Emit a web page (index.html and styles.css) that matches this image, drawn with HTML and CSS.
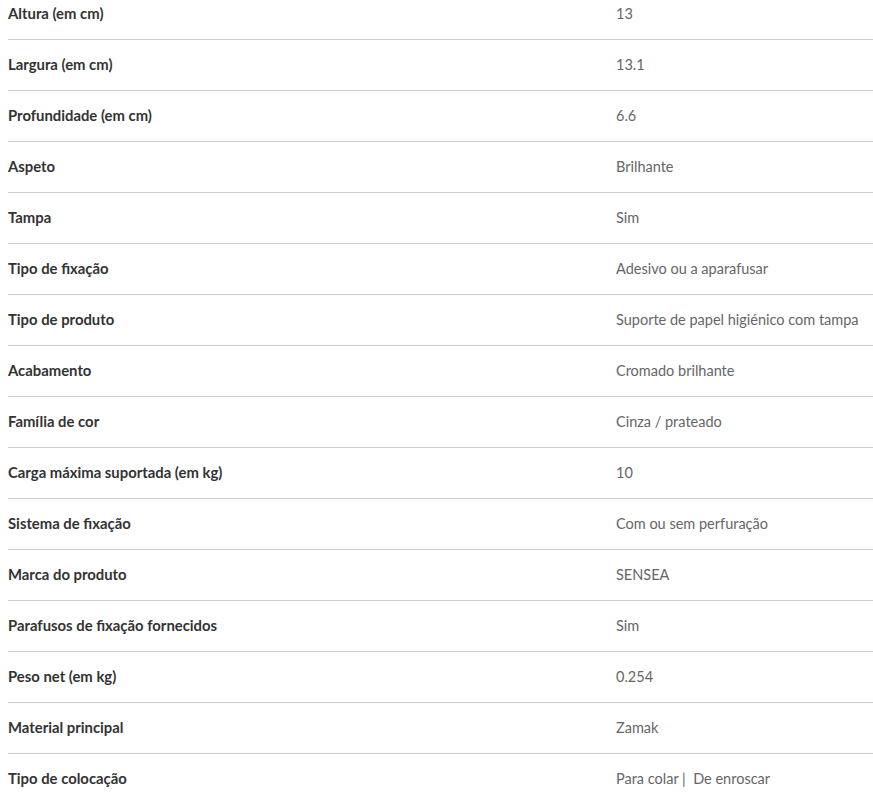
FILE: index.html
```html
<!DOCTYPE html>
<html lang="pt">
<head>
<meta charset="utf-8">
<link rel="stylesheet" href="styles.css">
</head>
<body>
<div class="specs">
  <div class="row"><div class="label">Altura (em cm)</div><div class="value">13</div></div>
  <div class="row"><div class="label">Largura (em cm)</div><div class="value">13.1</div></div>
  <div class="row"><div class="label">Profundidade (em cm)</div><div class="value">6.6</div></div>
  <div class="row"><div class="label">Aspeto</div><div class="value">Brilhante</div></div>
  <div class="row"><div class="label">Tampa</div><div class="value">Sim</div></div>
  <div class="row"><div class="label">Tipo de fixação</div><div class="value">Adesivo ou a aparafusar</div></div>
  <div class="row"><div class="label">Tipo de produto</div><div class="value">Suporte de papel higiénico com tampa</div></div>
  <div class="row"><div class="label">Acabamento</div><div class="value">Cromado brilhante</div></div>
  <div class="row"><div class="label">Família de cor</div><div class="value">Cinza / prateado</div></div>
  <div class="row"><div class="label">Carga máxima suportada (em kg)</div><div class="value">10</div></div>
  <div class="row"><div class="label">Sistema de fixação</div><div class="value">Com ou sem perfuração</div></div>
  <div class="row"><div class="label">Marca do produto</div><div class="value">SENSEA</div></div>
  <div class="row"><div class="label">Parafusos de fixação fornecidos</div><div class="value">Sim</div></div>
  <div class="row"><div class="label">Peso net (em kg)</div><div class="value">0.254</div></div>
  <div class="row"><div class="label">Material principal</div><div class="value">Zamak</div></div>
  <div class="row"><div class="label">Tipo de colocação</div><div class="value">Para colar |&nbsp; De enroscar</div></div>
</div>
</body>
</html>
```
FILE: styles.css
```css
html, body {
  margin: 0;
  padding: 0;
  background: #fff;
}
body {
  font-family: Lato, Roboto, sans-serif;
  font-size: 15px;
  overflow: hidden;
}
.specs {
  margin: -11px 0 0 8px;
}
.row {
  display: grid;
  grid-template-columns: 608px 1fr;
  align-items: center;
  box-sizing: border-box;
  height: 51px;
  padding-bottom: 2px;
  border-bottom: 1px solid #cdcdcd;
}
.label {
  font-size: 14.85px;
  font-weight: 700;
  color: #333;
}
.value {
  font-size: 14.5px;
  color: #666;
}
```
